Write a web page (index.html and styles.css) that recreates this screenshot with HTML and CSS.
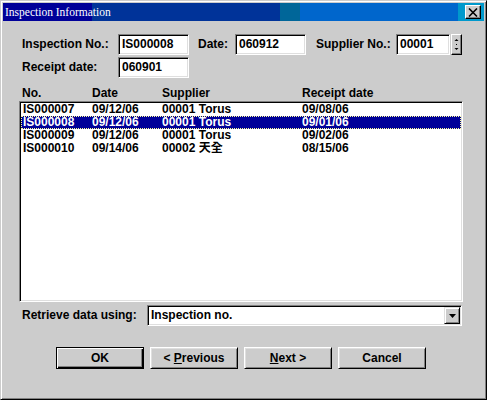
FILE: index.html
```html
<!DOCTYPE html>
<html lang="en">
<head>
    <meta charset="UTF-8">
    <title>Inspection Information</title>
    <link rel="stylesheet" href="styles.css">
</head>
<body>
    <div class="window">
        <!-- Title Bar -->
        <div class="titlebar">
            <span class="title">Inspection Information</span>
            <span class="close-btn">
                <svg width="10" height="9" viewBox="0 0 10 9">
                    <path d="M1 0.5 L9 8.5 M9 0.5 L1 8.5" stroke="#000" stroke-width="1.6" fill="none"/>
                </svg>
            </span>
        </div>

        <div class="content">
            <!-- Header Fields -->
            <div class="field-row">
                <span class="lbl lbl-first">Inspection No.:</span>
                <div class="field field-wide">IS000008</div>
                <span class="lbl lbl-date">Date:</span>
                <div class="field field-wide">060912</div>
                <span class="lbl lbl-supp">Supplier No.:</span>
                <div class="field field-supp">00001</div>
                <div class="spinner">
                    <svg width="9" height="19" viewBox="0 0 9 19">
                        <polygon points="2.5,6 6.5,6 4.5,4" fill="#000"/>
                        <rect x="4" y="9" width="1" height="1" fill="#000"/>
                        <polygon points="2.5,13 6.5,13 4.5,15" fill="#000"/>
                    </svg>
                </div>
            </div>
            <div class="field-row second">
                <span class="lbl lbl-first">Receipt date:</span>
                <div class="field field-wide">060901</div>
            </div>

            <!-- List -->
            <div class="list-head">
                <span class="col col-no">No.</span>
                <span class="col col-date">Date</span>
                <span class="col col-supp">Supplier</span>
                <span class="col">Receipt date</span>
            </div>
            <div class="listbox">
                <div class="list-row">
                    <span class="col col-no">IS000007</span>
                    <span class="col col-date">09/12/06</span>
                    <span class="col col-supp">00001 Torus</span>
                    <span class="col">09/08/06</span>
                </div>
                <div class="list-row selected">
                    <span class="col col-no">IS000008</span>
                    <span class="col col-date">09/12/06</span>
                    <span class="col col-supp">00001 Torus</span>
                    <span class="col">09/01/06</span>
                </div>
                <div class="list-row">
                    <span class="col col-no">IS000009</span>
                    <span class="col col-date">09/12/06</span>
                    <span class="col col-supp">00001 Torus</span>
                    <span class="col">09/02/06</span>
                </div>
                <div class="list-row">
                    <span class="col col-no">IS000010</span>
                    <span class="col col-date">09/14/06</span>
                    <span class="col col-supp">00002 天全</span>
                    <span class="col">08/15/06</span>
                </div>
            </div>

            <!-- Retrieve -->
            <div class="retrieve-row">
                <span class="lbl lbl-retrieve">Retrieve data using:</span>
                <div class="combo">
                    <span class="combo-text">Inspection no.</span>
                    <span class="combo-btn">
                        <svg width="7" height="4" viewBox="0 0 7 4">
                            <polygon points="0,0 7,0 3.5,4" fill="#000"/>
                        </svg>
                    </span>
                </div>
            </div>

            <!-- Buttons -->
            <div class="button-row">
                <div class="btn btn-default">OK</div>
                <div class="btn">&lt; <u>P</u>revious</div>
                <div class="btn"><u>N</u>ext &gt;</div>
                <div class="btn">Cancel</div>
            </div>
        </div>
    </div>
</body>
</html>
```

FILE: styles.css
```css
/* General Styles */
body {
    margin: 0;
    background-color: #cccccc;
    font-family: 'Liberation Sans', Arial, 'Noto Sans CJK TC', sans-serif;
    font-size: 12px;
    font-weight: bold;
    color: #000;
}

.window {
    width: 487px;
    height: 400px;
    box-sizing: border-box;
    background-color: #cccccc;
    border: 1px solid;
    border-color: #cccccc #000 #000 #cccccc;
    box-shadow: inset 1px 1px #fff, inset -1px -1px #808080;
    padding: 2px;
}

/* Title Bar */
.titlebar {
    height: 18px;
    display: flex;
    align-items: center;
    justify-content: space-between;
    background: linear-gradient(to right,
        #000099 0, #000099 89px,
        #003399 89px, #003399 277px,
        #006699 277px, #006699 297px,
        #0066cc 297px, #0066cc 455px,
        #0099cc 455px, #0099cc 100%);
}

.title {
    font-family: 'Liberation Serif', 'Times New Roman', serif;
    font-weight: normal;
    font-size: 11.5px;
    color: #fff;
    padding-left: 2px;
}

.close-btn {
    width: 14px;
    height: 12px;
    margin-right: 3px;
    display: flex;
    align-items: center;
    justify-content: center;
    background-color: #cccccc;
    border: 1px solid;
    border-color: #fff #000 #000 #fff;
    box-shadow: inset -1px -1px #808080;
}

/* Content */
.content {
    padding-top: 13px;
}

.field-row {
    display: flex;
    align-items: center;
    height: 21px;
    padding-left: 19px;
}

.field-row.second {
    margin-top: 2px;
}

.lbl {
    line-height: 21px;
    white-space: nowrap;
}

.lbl-first {
    width: 96px;
}

.lbl-date {
    width: 37px;
    margin-left: 9px;
}

.lbl-supp {
    width: 80px;
    margin-left: 10px;
}

.field {
    height: 21px;
    box-sizing: border-box;
    background-color: #fff;
    border: 1px solid;
    border-color: #808080 #fff #fff #808080;
    box-shadow: inset 1px 1px #000, inset -1px -1px #dfdfdf;
    padding: 1px 0 0 3px;
    line-height: 17px;
}

.field-wide {
    width: 71px;
}

.field-supp {
    width: 54px;
}

.spinner {
    width: 11px;
    height: 21px;
    margin-left: 1px;
    box-sizing: border-box;
    border: 1px solid;
    border-color: #fff #000 #000 #fff;
    box-shadow: inset -1px -1px #808080;
    display: flex;
}

/* List */
.list-head {
    display: flex;
    margin-top: 8px;
    height: 15px;
    line-height: 15px;
    padding-left: 19px;
}

.col {
    white-space: nowrap;
}

.col-no {
    width: 70px;
}

.col-date {
    width: 70px;
}

.col-supp {
    width: 140px;
}

.listbox {
    margin-left: 16px;
    width: 444px;
    height: 201px;
    box-sizing: border-box;
    background-color: #fff;
    border: 1px solid;
    border-color: #808080 #fff #fff #808080;
    box-shadow: inset 1px 1px #000, inset -1px -1px #dfdfdf;
    padding: 1px 1px 0 1px;
}

.list-row {
    display: flex;
    height: 13px;
    line-height: 13px;
    padding-left: 2px;
}

.list-row .col-no {
    width: 69px;
}

.list-row.selected {
    background-color: #000099;
    color: #fff;
    outline: 1px dotted #ffff99;
    outline-offset: -1px;
}

/* Retrieve */
.retrieve-row {
    display: flex;
    align-items: center;
    margin-top: 3px;
    height: 21px;
    padding-left: 19px;
}

.lbl-retrieve {
    width: 125px;
}

.combo {
    width: 315px;
    height: 21px;
    box-sizing: border-box;
    display: flex;
    align-items: center;
    background-color: #fff;
    border: 1px solid;
    border-color: #808080 #fff #fff #808080;
    box-shadow: inset 1px 1px #000, inset -1px -1px #dfdfdf;
    padding: 1px;
}

.combo-text {
    flex: 1;
    padding-left: 2px;
    line-height: 17px;
}

.combo-btn {
    width: 16px;
    height: 17px;
    box-sizing: border-box;
    display: flex;
    align-items: center;
    justify-content: center;
    background-color: #cccccc;
    border: 1px solid;
    border-color: #dfdfdf #000 #000 #dfdfdf;
    box-shadow: inset 1px 1px #fff, inset -1px -1px #808080;
}

/* Buttons */
.button-row {
    display: flex;
    gap: 6px;
    margin-top: 21px;
    padding-left: 53px;
}

.btn {
    width: 88px;
    height: 22px;
    box-sizing: border-box;
    text-align: center;
    line-height: 20px;
    background-color: #cccccc;
    border: 1px solid;
    border-color: #fff #000 #000 #fff;
    box-shadow: inset 1px 1px #dfdfdf, inset -1px -1px #808080;
}

.btn-default {
    border-color: #000;
    box-shadow: inset 1px 1px #fff, inset -1px -1px #000, inset -2px -2px #808080;
}
```
